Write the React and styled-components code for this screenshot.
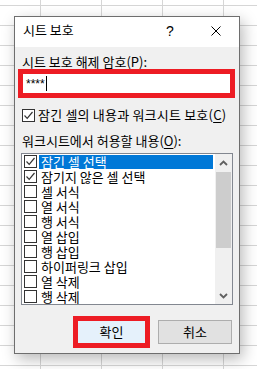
import React from 'react';
import styled, { createGlobalStyle } from 'styled-components';

const GlobalStyle = createGlobalStyle`
  html, body {
    margin: 0;
    padding: 0;
    overflow: hidden;
  }
  body {
    font-family: "Noto Sans CJK KR", "Noto Sans", sans-serif;
    font-size: 13px;
    color: #000;
  }
`;

const Sheet = styled.div`
  position: relative;
  width: 257px;
  height: 369px;
  background-color: #fff;
  background-image:
    linear-gradient(to right, #d6d6d6 1px, transparent 1px),
    linear-gradient(to bottom, #d6d6d6 1px, transparent 1px);
  background-size: 61px 20px, 61px 20px;
  background-position: 40px 5px, 40px 5px;
  overflow: hidden;
`;

const Dialog = styled.div`
  position: absolute;
  left: 14px;
  top: 16px;
  width: 226px;
  height: 338px;
  box-sizing: border-box;
  border: 1px solid #6e6e6e;
  background: #f0f0f0;
  box-shadow: 3px 5px 14px rgba(0, 0, 0, 0.28);
  display: flex;
  flex-direction: column;
`;

const TitleBar = styled.div`
  height: 30px;
  box-sizing: border-box;
  padding-bottom: 2px;
  background: #fff;
  display: flex;
  align-items: center;
`;

const Title = styled.div`
  flex: 1;
  padding-left: 8px;
  margin-top: -2px;
  line-height: 14px;
`;

const TitleButton = styled.div`
  width: 46px;
  height: 100%;
  display: flex;
  align-items: center;
  justify-content: center;
  line-height: 14px;
  font-family: "Liberation Sans", sans-serif;
  font-size: 14px;
`;

const Body = styled.div`
  flex: 1;
  padding: 8px 7px 0;
  display: flex;
  flex-direction: column;
`;

const FieldLabel = styled.div`
  line-height: 14px;
  height: 14px;
  margin-top: ${p => p.$top || 0}px;
  white-space: nowrap;
`;

const Key = styled.span`
  text-decoration: underline;
  text-underline-offset: 2px;
`;

const RedFrame = styled.div`
  border: 5px solid #ed1c24;
  margin: ${p => p.$margin};
`;

const PasswordInput = styled.div`
  height: 19px;
  background: #fff;
  display: flex;
  align-items: center;
  padding-left: 3px;
  font-family: "Liberation Sans", sans-serif;
  font-size: 12px;
`;

const Caret = styled.span`
  display: inline-block;
  width: 1px;
  height: 15px;
  margin-left: 1px;
  background: #000;
`;

const CheckRow = styled.div`
  margin-top: 10px;
  height: 14px;
  display: flex;
  align-items: center;
  gap: 3px;
  white-space: nowrap;
  line-height: 14px;
  letter-spacing: 0.2px;
`;

const Box = styled.div`
  width: 13px;
  height: 13px;
  box-sizing: border-box;
  border: 1px solid #333;
  background: #fff;
  flex: none;
  display: flex;
  align-items: center;
  justify-content: center;
`;

const ListBox = styled.div`
  margin: 5px -1px 0;
  height: 152px;
  box-sizing: border-box;
  border: 1px solid #828790;
  background: #fff;
  display: flex;
`;

const Items = styled.div`
  flex: 1;
  display: flex;
  flex-direction: column;
`;

const Item = styled.div`
  height: 15px;
  flex: none;
  display: flex;
  align-items: center;
  padding-left: 2px;
`;

const ItemText = styled.span`
  flex: ${p => (p.$selected ? 1 : 'none')};
  margin: 0 2px;
  padding: 0 2px;
  height: 14px;
  line-height: 14px;
  white-space: nowrap;
  background: ${p => (p.$selected ? '#0078d7' : 'transparent')};
  color: ${p => (p.$selected ? '#fff' : '#000')};
`;

const ScrollBar = styled.div`
  width: 17px;
  background: #f0f0f0;
  display: flex;
  flex-direction: column;
`;

const Arrow = styled.div`
  height: 17px;
  display: flex;
  align-items: center;
  justify-content: center;
`;

const Track = styled.div`
  flex: 1;
  padding: 1px 1px 0;
`;

const Thumb = styled.div`
  height: 76px;
  background: #cdcdcd;
`;

const ButtonRow = styled.div`
  margin-top: 15px;
  height: 24px;
  display: flex;
  justify-content: flex-end;
  align-items: center;
  gap: 8px;
`;

const DefaultButton = styled.div`
  width: 67px;
  height: 22px;
  margin: -4px 0;
  border: 5px solid #ed1c24;
  background: #e5f1fb;
  display: flex;
  align-items: center;
  justify-content: center;
  line-height: 14px;
`;

const Button = styled.div`
  width: 74px;
  height: 24px;
  box-sizing: border-box;
  border: 1px solid #adadad;
  background: #e1e1e1;
  display: flex;
  align-items: center;
  justify-content: center;
  line-height: 14px;
`;

const Check = () => (
  <svg width="11" height="11" viewBox="0 0 11 11">
    <polyline points="1.5,5.5 4.2,8.3 9.5,2" fill="none" stroke="#333" strokeWidth="1.2" />
  </svg>
);

const CheckBox = ({ checked }) => <Box>{checked && <Check />}</Box>;

const items = [
  { label: '잠긴 셀 선택', checked: true, selected: true },
  { label: '잠기지 않은 셀 선택', checked: true },
  { label: '셀 서식' },
  { label: '열 서식' },
  { label: '행 서식' },
  { label: '열 삽입' },
  { label: '행 삽입' },
  { label: '하이퍼링크 삽입' },
  { label: '열 삭제' },
  { label: '행 삭제' },
];

export default function App() {
  return (
    <>
      <GlobalStyle />
      <Sheet>
        <Dialog>
          <TitleBar>
            <Title>시트 보호</Title>
            <TitleButton>?</TitleButton>
            <TitleButton>
              <svg width="10" height="10" viewBox="0 0 10 10">
                <path d="M0.5 0.5 L9.5 9.5 M9.5 0.5 L0.5 9.5" stroke="#000" strokeWidth="1" />
              </svg>
            </TitleButton>
          </TitleBar>
          <Body>
            <FieldLabel>
              시트 보호 해제 암호(<Key>P</Key>):
            </FieldLabel>
            <RedFrame $margin="0 -3px 0 -4px">
              <PasswordInput>
                ****<Caret />
              </PasswordInput>
            </RedFrame>
            <CheckRow>
              <CheckBox checked />
              <span>
                잠긴 셀의 내용과 워크시트 보호(<Key>C</Key>)
              </span>
            </CheckRow>
            <FieldLabel $top={12}>
              워크시트에서 허용할 내용(<Key>O</Key>):
            </FieldLabel>
            <ListBox>
              <Items>
                {items.map(it => (
                  <Item key={it.label}>
                    <CheckBox checked={it.checked} />
                    <ItemText $selected={it.selected}>{it.label}</ItemText>
                  </Item>
                ))}
              </Items>
              <ScrollBar>
                <Arrow>
                  <svg width="9" height="6" viewBox="0 0 9 6">
                    <polyline points="1,5 4.5,1.5 8,5" fill="none" stroke="#606060" strokeWidth="1.8" />
                  </svg>
                </Arrow>
                <Track>
                  <Thumb />
                </Track>
                <Arrow>
                  <svg width="9" height="6" viewBox="0 0 9 6">
                    <polyline points="1,1 4.5,4.5 8,1" fill="none" stroke="#606060" strokeWidth="1.8" />
                  </svg>
                </Arrow>
              </ScrollBar>
            </ListBox>
            <ButtonRow>
              <DefaultButton>확인</DefaultButton>
              <Button>취소</Button>
            </ButtonRow>
          </Body>
        </Dialog>
      </Sheet>
    </>
  );
}
